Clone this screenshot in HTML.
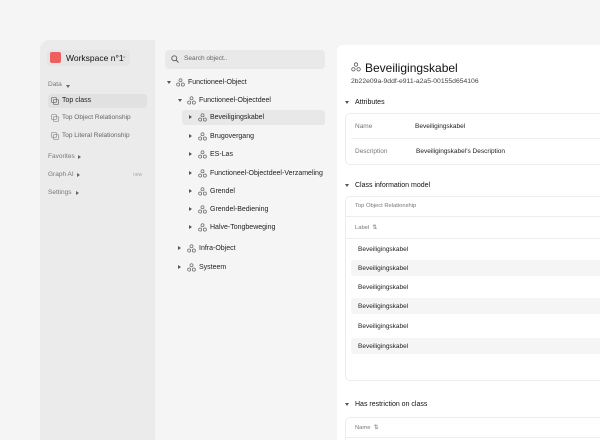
<!DOCTYPE html>
<html><head><meta charset="utf-8"><style>
*{margin:0;padding:0;box-sizing:border-box}
html,body{width:600px;height:440px;overflow:hidden}
body{background:#f5f5f5;font-family:"Liberation Sans",sans-serif;position:relative;color:#222}
.a{position:absolute;white-space:nowrap;line-height:1}
#side{position:absolute;left:40px;top:40px;width:115px;height:400px;background:#ebebeb;border-top-left-radius:9px}
#panel{position:absolute;left:337px;top:45px;width:263px;height:395px;background:#fff;border-top-left-radius:6px}
.t{font-size:7px;color:#222}
.g{font-size:6.5px;color:#777}
.card{position:absolute;border:1px solid #ececec;border-radius:5px;background:#fff}
.tri{position:absolute;width:0;height:0}
.tr{border-left:3px solid #555;border-top:2px solid transparent;border-bottom:2px solid transparent}
.td{border-top:3px solid #555;border-left:2px solid transparent;border-right:2px solid transparent}
svg{position:absolute}
</style></head><body>
<div id="side"></div>
<div class="a" style="left:47px;top:50px;width:83px;height:16px;background:#e5e5e5;border-radius:4px"></div>
<div class="a" style="left:50px;top:52px;width:11px;height:11px;background:#ee5f5f;border-radius:2px"></div>
<div class="a" style="left:66px;top:54px;font-size:8.5px;color:#111">Workspace n°1</div>
<div class="a" style="left:121px;top:53px;font-size:7px;color:#888">⌄</div>
<div class="a g" style="left:48px;top:82px">Data</div><div class="tri td" style="left:66px;top:85px;border-top-color:#666"></div>
<div class="a" style="left:48px;top:94px;width:99px;height:14px;background:#e1e1e1;border-radius:3px"></div>
<svg width="8" height="8" style="left:51px;top:97px" viewBox="0 0 8 8"><rect x=".5" y=".5" width="5" height="5" rx="1" fill="none" stroke="#777" stroke-width=".8"/><rect x="2.5" y="2.5" width="5" height="5" rx="1" fill="none" stroke="#777" stroke-width=".8"/></svg>
<div class="a t" style="left:62px;top:97px">Top class</div>
<svg width="8" height="8" style="left:51px;top:114px" viewBox="0 0 8 8"><rect x=".5" y=".5" width="5" height="5" rx="1" fill="none" stroke="#999" stroke-width=".8"/><rect x="2.5" y="2.5" width="5" height="5" rx="1" fill="none" stroke="#999" stroke-width=".8"/></svg>
<div class="a g" style="left:62px;top:115px;color:#666">Top Object Relationship</div>
<svg width="8" height="8" style="left:51px;top:132px" viewBox="0 0 8 8"><rect x=".5" y=".5" width="5" height="5" rx="1" fill="none" stroke="#999" stroke-width=".8"/><rect x="2.5" y="2.5" width="5" height="5" rx="1" fill="none" stroke="#999" stroke-width=".8"/></svg>
<div class="a g" style="left:62px;top:133px;color:#666">Top Literal Relationship</div>
<div class="a g" style="left:48px;top:154px">Favorites</div><div class="tri tr" style="left:78px;top:155px;border-left-color:#666"></div>
<div class="a g" style="left:48px;top:172px">Graph AI</div><div class="tri tr" style="left:77px;top:173px;border-left-color:#666"></div>
<div class="a" style="left:133px;top:173px;font-size:5px;color:#aaa">new</div>
<div class="a g" style="left:48px;top:190px">Settings</div><div class="tri tr" style="left:76px;top:191px;border-left-color:#666"></div>

<div class="a" style="left:165px;top:50px;width:160px;height:19px;background:#e9e9e9;border-radius:4px"></div>
<svg width="8" height="8" style="left:171px;top:55px" viewBox="0 0 8 8"><circle cx="3.3" cy="3.3" r="2.5" fill="none" stroke="#555" stroke-width=".9"/><path d="M5.2 5.2L7.5 7.5" stroke="#555" stroke-width=".9"/></svg>
<div class="a" style="left:184px;top:56px;font-size:6.5px;color:#666">Search object..</div>
<div class="a" style="left:182px;top:110px;width:143px;height:15px;background:#e8e8e8;border-radius:3px"></div>
<div id="tree"></div>

<div id="panel"></div>
<svg width="10" height="10" style="left:351px;top:62px" viewBox="0 0 10 10"><g fill="none" stroke="#555" stroke-width=".8"><circle cx="5" cy="2.5" r="1.7"/><circle cx="2.4" cy="7.3" r="1.7"/><circle cx="7.6" cy="7.3" r="1.7"/></g></svg>
<div class="a" style="left:365px;top:62px;font-size:12px;color:#111">Beveiligingskabel</div>
<div class="a" style="left:351px;top:79px;font-size:6.8px;color:#444">2b22e09a-9ddf-e911-a2a5-00155d654106</div>
<div class="tri td" style="left:345px;top:101px"></div><div class="a t" style="left:355px;top:99px;color:#111">Attributes</div>
<div class="card" style="left:345px;top:113px;width:270px;height:52px"></div>
<div class="a g" style="left:355px;top:124px">Name</div><div class="a" style="left:415px;top:124px;font-size:6.5px">Beveiligingskabel</div>
<div class="a" style="left:351px;top:138px;width:260px;height:1px;background:#eee"></div>
<div class="a g" style="left:355px;top:149px">Description</div><div class="a" style="left:416px;top:149px;font-size:6.5px">Beveiligingskabel's Description</div>
<div class="tri td" style="left:345px;top:184px"></div><div class="a t" style="left:355px;top:182px;color:#111">Class information model</div>
<div class="card" style="left:345px;top:196px;width:270px;height:185px"></div>
<div class="a" style="left:355px;top:204px;font-size:5.8px;color:#777">Top Object Relationship</div>
<div class="a" style="left:346px;top:216px;width:260px;height:1px;background:#eee"></div>
<div class="a" style="left:355px;top:226px;font-size:5.8px;color:#777">Label &nbsp;⇅</div>
<div class="a" style="left:346px;top:238px;width:260px;height:1px;background:#eee"></div>
<div id="rows"></div>
<div class="tri td" style="left:345px;top:403px"></div><div class="a t" style="left:355px;top:401px;color:#111">Has restriction on class</div>
<div class="card" style="left:345px;top:417px;width:270px;height:40px"></div>
<div class="a" style="left:355px;top:426px;font-size:5.8px;color:#777">Name &nbsp;⇅</div>
<div class="a" style="left:346px;top:437px;width:260px;height:1px;background:#eee"></div>
<script>
var ic=function(x,y){return '<svg width="9" height="9" style="left:'+x+'px;top:'+y+'px" viewBox="0 0 10 10"><g fill="none" stroke="#666" stroke-width=".8"><circle cx="5" cy="2.5" r="1.7"/><circle cx="2.4" cy="7.3" r="1.7"/><circle cx="7.6" cy="7.3" r="1.7"/></g></svg>'};
var T=[[167,82,'d','Functioneel-Object'],[178,100,'d','Functioneel-Objectdeel'],[189,117,'r','Beveiligingskabel'],[189,136,'r','Brugovergang'],[189,154,'r','ES-Las'],[189,173,'r','Functioneel-Objectdeel-Verzameling'],[189,191,'r','Grendel'],[189,209,'r','Grendel-Bediening'],[189,227,'r','Halve-Tongbeweging'],[178,248,'r','Infra-Object'],[178,267,'r','Systeem']];
var h='';T.forEach(function(t){var x=t[0],y=t[1];h+='<div class="tri '+(t[2]=='d'?'td':'tr')+'" style="left:'+x+'px;top:'+(y-(t[2]=='d'?1:2))+'px"></div>'+ic(x+9,y-4)+'<div class="a t" style="left:'+(x+21)+'px;top:'+(y-3)+'px">'+t[3]+'</div>';});
document.getElementById('tree').innerHTML=h;
var r='';[249,268,287,306,326,346].forEach(function(y,i){if(i%2)r+='<div class="a" style="left:351px;top:'+(y-8)+'px;width:260px;height:16px;background:#f5f5f5;border-radius:3px"></div>';r+='<div class="a" style="left:358px;top:'+(y-2)+'px;font-size:6.5px">Beveiligingskabel</div>';});
document.getElementById('rows').innerHTML=r;
</script>
</body></html>
